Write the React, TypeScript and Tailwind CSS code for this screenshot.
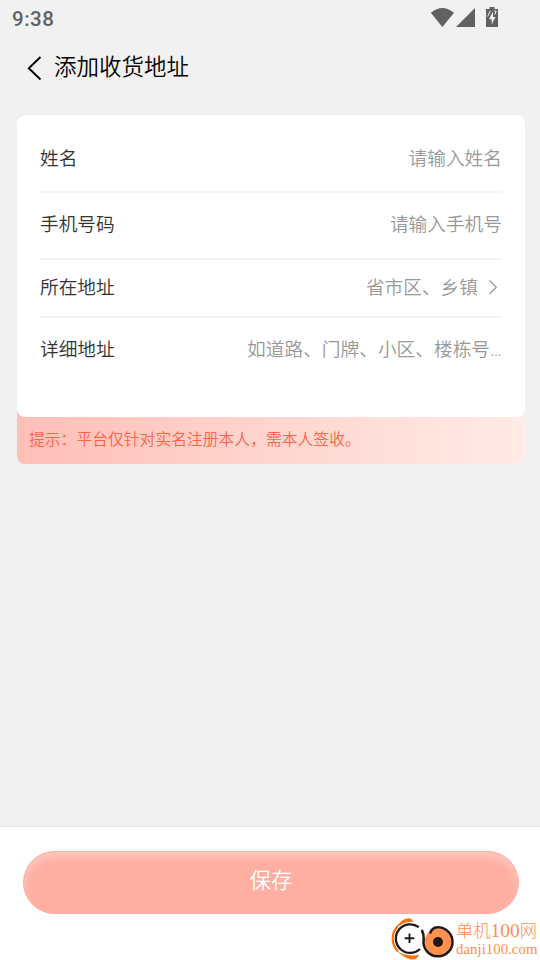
import React from 'react';

interface FieldProps {
  label: string;
  placeholder: string;
  className: string;
  arrow?: boolean;
}

const Field: React.FC<FieldProps> = ({ label, placeholder, className, arrow }) => (
  <div className={`flex items-center justify-between text-[18.7px] leading-7 ${className}`}>
    <span className="text-[#333333]">{label}</span>
    <span className="flex items-center text-[#999999]">
      {placeholder}
      {arrow && (
        <svg className="mb-0.5 ml-[10px] mr-1 h-4 w-[10px]" viewBox="0 0 10 16" fill="none" stroke="#999999" strokeWidth="1.3">
          <path d="M1.5 1.5 8.3 8.3 1.5 15" />
        </svg>
      )}
    </span>
  </div>
);

const StatusBar: React.FC = () => (
  <div className="flex h-9 items-center justify-between pl-3 pr-10 text-[#616161]">
    <span className="pt-0.5 font-[Roboto] text-[20.5px] font-medium leading-6 tracking-[0.5px]">9:38</span>
    <svg className="h-[22px] w-[70px]" viewBox="430 7 70 22" fill="#616161">
      <path d="M430.8 12.8Q442.4 3.2 454 12.8L442.4 27Z" />
      <path d="M475 8V27H456Z" />
      <path d="M489.5 7h5v2h3.5v18h-12V9h3.5z" />
      <path d="M493 11.5 489 19.3h2.7V24.5l3.8-7.5h-2.5z" fill="#f1f1f1" />
      <path d="M487.6 16.5 490.3 10.8M494.2 11h2M496.2 11 494.8 14.5" fill="none" stroke="#f1f1f1" strokeWidth="1" />
    </svg>
  </div>
);

const Watermark: React.FC = () => (
  <div className="absolute left-[390px] top-[916px] flex text-[#ff8f4c]">
    <svg className="h-11 w-[66px] shrink-0" viewBox="390 916 66 44" fill="none">
      <path d="M397.5 926.5A18 18 0 0 0 398 951.5" stroke="#ff6f0f" strokeWidth="2.2" />
      <path d="M395 929.5Q400 919 408.500 918.2Q412.5 918.5 413.3 921.8Q403 921 395 929.5Z" fill="#ff6f0f" />
      <path d="M396 949.5Q403 957 419 955Q417 960 411 959.5Q402 957 396 949.5Z" fill="#ff6f0f" />
      <path d="M418.8 927.2A14.3 14.3 0 1 0 420 949" stroke="#231815" strokeWidth="2.3" />
      <path d="M404.7 938.3h9.6M409.5 933.5v9.6" stroke="#231815" strokeWidth="1.9" />
      <circle cx="438" cy="941.8" r="13.3" fill="#ff914d" />
      <path d="M430 933.5Q431 929.5 434.5 927.8A14.5 14.5 0 1 1 423.7 939.5Q424 934 421.8 929.8" stroke="#231815" strokeWidth="2.5" />
      <circle cx="438" cy="942" r="5" fill="#231815" />
    </svg>
    <div className="whitespace-nowrap font-['Liberation_Serif','Noto_Sans_CJK_SC',serif] font-light">
      <div className="mt-[3px] text-[17.3px] leading-[23px]">
        单机<span className="text-[19.5px]">100</span>网
      </div>
      <div className="-mt-px text-[14.9px] leading-[15px]">danji100.com</div>
    </div>
  </div>
);

export default function App() {
  return (
    <div className="relative flex h-[960px] w-[540px] flex-col overflow-hidden bg-[#f1f1f1] font-[Roboto,'Noto_Sans_CJK_SC',sans-serif] font-[350]">
      <StatusBar />

      <header className="flex h-[62px] items-center pl-[27px]">
        <svg className="mt-[2px] h-6 w-[15px]" viewBox="0 0 15 24" fill="none" stroke="#000" strokeWidth="1.9">
          <path d="M13.5 1 1.8 12.3 13.5 23.5" />
        </svg>
        <h1 className="ml-3 text-[22.5px] leading-8 text-black">添加收货地址</h1>
      </header>

      <main className="ml-[17px] mr-[15px] mt-[17px] flex-1">
        <div className="rounded-lg bg-linear-to-r from-[#ffbfb7] to-[#ffebe7]">
          <div className="h-[302px] rounded-lg bg-white px-[23px]">
            <Field label="姓名" placeholder="请输入姓名" className="h-[78px] border-b-2 border-[#f4f4f4] pt-[11px]" />
            <Field label="手机号码" placeholder="请输入手机号" className="h-[67px] border-b-2 border-[#f4f4f4] pb-0.5" />
            <Field label="所在地址" placeholder="省市区、乡镇" className="h-[58px] border-b-2 border-[#f4f4f4]" arrow />
            <Field label="详细地址" placeholder="如道路、门牌、小区、楼栋号…" className="h-16" />
          </div>
          <p className="h-[47px] pl-3 text-[15.8px] leading-[45px] text-[#ff6446]">
            提示：平台仅针对实名注册本人，需本人签收。
          </p>
        </div>
      </main>

      <footer className="h-[134px] border-t border-[#e4e4e4] bg-white pl-[23px] pr-[21px] pt-6">
        <button className="block h-[63px] w-full rounded-full border border-[#ffaea2] bg-[#ffaea2] pb-0.5 text-[21.5px] text-white shadow-[inset_0_5px_9px_#ffc8bf]">
          保存
        </button>
      </footer>

      <Watermark />
    </div>
  );
}
